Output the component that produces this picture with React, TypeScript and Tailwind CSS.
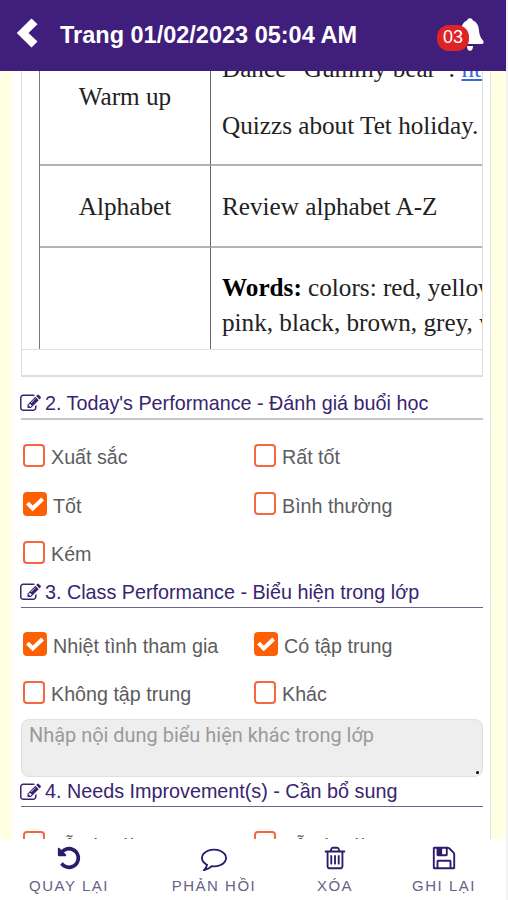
import React from "react";

const PENCIL =
  "M888 1184l116-116-152-152-116 116v56h96v96h56zm440-720q-16-16-33 1l-350 350q-17 17-1 33t33-1l350-350q17-17 1-33zm80 594v190q0 119-84.5 203.5t-203.5 84.5h-832q-119 0-203.5-84.5t-84.5-203.5v-832q0-119 84.5-203.5t203.5-84.5h832q63 0 117 25 15 7 18 23 3 17-9 29l-49 49q-14 14-32 8-23-6-45-6h-832q-66 0-113 47t-47 113v832q0 66 47 113t113 47h832q66 0 113-47t47-113v-126q0-13 9-22l64-64q15-15 35-7t20 29zm-96-738l288 288-672 672h-288v-288zm444 132l-92 92-288-288 92-92q28-28 68-28t68 28l152 152q28 28 28 68t-28 68z";
const TRASH =
  "M704 736v576q0 14-9 23t-23 9h-64q-14 0-23-9t-9-23v-576q0-14 9-23t23-9h64q14 0 23 9t9 23zm256 0v576q0 14-9 23t-23 9h-64q-14 0-23-9t-9-23v-576q0-14 9-23t23-9h64q14 0 23 9t9 23zm256 0v576q0 14-9 23t-23 9h-64q-14 0-23-9t-9-23v-576q0-14 9-23t23-9h64q14 0 23 9t9 23zm128 724v-948h-896v948q0 22 7 40.5t14.5 27 10.5 8.5h832q3 0 10.5-8.5t14.5-27 7-40.5zm-672-1076h448l-48-117q-7-9-17-11h-317q-10 2-17 11zm928 32v64q0 14-9 23t-23 9h-96v948q0 83-47 143.5t-113 60.5h-832q-66 0-113-58.5t-47-141.5v-952h-96q-14 0-23-9t-9-23v-64q0-14 9-23t23-9h309l70-167q15-37 54-63t79-26h320q40 0 79 26t54 63l70 167h309q14 0 23 9t9 23z";
const FLOPPY =
  "M512 1536h768v-384h-768v384zm896 0h128v-896q0-14-10-38.5t-20-34.5l-281-281q-10-10-34-20t-39-10v416q0 40-28 68t-68 28h-576q-40 0-68-28t-28-68v-416h-128v1280h128v-416q0-40 28-68t68-28h832q40 0 68 28t28 68v416zm-384-928v-320q0-13-9.5-22.5t-22.5-9.5h-192q-13 0-22.5 9.5t-9.5 22.5v320q0 13 9.5 22.5t22.5 9.5h192q13 0 22.5-9.5t9.5-22.5zm640 32v928q0 40-28 68t-68 28h-1344q-40 0-68-28t-28-68v-1344q0-40 28-68t68-28h928q40 0 88 20t76 48l280 280q28 28 48 76t20 88z";
const UNDO =
  "M1664 896q0 156-61 298t-164 245-245 164-298 61q-172 0-327-72.5t-264-204.5q-7-10-6.5-22.5t8.5-20.5l137-138q10-9 25-9 16 2 23 12 73 95 179 147t225 52q104 0 198.5-40.5t163.5-109.5 109.5-163.5 40.5-198.5-40.5-198.5-109.5-163.5-163.5-109.5-198.5-40.5q-98 0-188 35.5t-160 101.5l137 138q31 30 14 69-17 40-59 40h-448q-26 0-45-19t-19-45v-448q0-42 40-59 39-17 69 14l130 129q107-101 244.5-156.5t284.5-55.5q156 0 298 61t245 164 164 245 61 298z";
const COMMENT =
  "M896 384q-204 0-381.5 69.5t-282 187.5-104.5 255q0 112 71.5 213.5t201.5 175.5l87 50-27 96q-24 91-70 172 152-63 275-171l43-38 57 6q69 8 130 8 204 0 381.5-69.5t282-187.5 104.5-255-104.5-255-282-187.5-381.5-69.5zm896 512q0 174-120 321.5t-326 233-450 85.5q-70 0-145-8-198 175-460 242-49 14-114 22h-5q-15 0-27-10.5t-16-27.5v-1q-3-4-.5-12t2-10 4.5-9.5l6-9 7-8.5 8-9q7-8 31-34.5t34.5-38 31-39.5 32.5-51 27-59 26-76q-157-89-247.5-220t-90.5-281q0-174 120-321.5t326-233 450-85.5 450 85.5 326 233 120 321.5z";

function Icon({ d, className }: { d: string; className: string }) {
  return (
    <svg viewBox="0 0 1792 1792" className={className} fill="currentColor">
      <path d={d} />
    </svg>
  );
}

function Heading({ children, line }: { children: React.ReactNode; line: string }) {
  return (
    <h2 className={`flex items-center text-[19.75px] whitespace-nowrap text-[#38246f] ${line}`}>
      <Icon d={PENCIL} className="mr-[4px] -ml-px size-[21px] shrink-0" />
      {children}
    </h2>
  );
}

function Option({ label, checked = false, pad = "pt-[5px]" }: { label: string; checked?: boolean; pad?: string }) {
  return (
    <label className="flex h-[48.5px] w-[231px] items-center pl-[2px] text-[19.7px] whitespace-nowrap text-[#5c5c60]">
      {checked ? (
        <span className="mr-[6px] flex size-[24px] shrink-0 items-center justify-center rounded-[4px] bg-[#fd6004]">
          <svg viewBox="0 0 24 24" className="size-[24px]" fill="none" stroke="white" strokeWidth="4">
            <path d="M4.5 11.2l5.2 5.2L19.6 7" />
          </svg>
        </span>
      ) : (
        <span className="mr-[6px] h-[23px] w-[22px] shrink-0 rounded-[4px] border-2 border-[#f4673f] bg-white" />
      )}
      <span className={pad}>{label}</span>
    </label>
  );
}

function Action({ d, label, className }: { d: string; label: string; className: string }) {
  return (
    <button className={`flex flex-col items-center ${className}`}>
      <Icon d={d} className="size-[26px] text-[#2d1b6b]" />
      <span className="mt-[6px] text-[15px] leading-[18px] tracking-[1.5px] whitespace-nowrap text-[#67618a]">{label}</span>
    </button>
  );
}

export default function App() {
  return (
    <div className="flex h-[900px] w-[508px] flex-col overflow-hidden bg-[#f3f3f5] font-['Liberation_Sans',Arial,sans-serif]">
      <header className="flex h-[71px] w-[506px] shrink-0 items-center bg-[#3f1f7b] text-white">
        <svg viewBox="0 0 22 30" className="ml-[16px] h-[30px] w-[22px] -translate-y-[3px]" fill="currentColor">
          <path d="M15.5 0.5L21.5 6.2L12.5 15L21.5 23.5L15.5 29.5L0.8 15Z" />
        </svg>
        <h1 className="ml-[22px] pt-px text-[23.5px] font-bold whitespace-nowrap">Trang 01/02/2023 05:04 AM</h1>
        <div className="relative mr-[22px] ml-auto h-[34px] w-[47px]">
          <svg viewBox="0 0 28 34" className="absolute -top-px right-0 h-[34px] w-[28px]" fill="currentColor">
            <path d="M14 0.3C15.8 0.3 16.8 1.5 16.9 2.6C20.5 3.8 22.3 7 22.8 11C23.5 17.5 24.5 19.5 27.2 22.8C28.2 24.6 27.5 26 25.8 26H2.2C0.5 26 0 24.6 0.8 22.8C3.5 19.5 4.5 17.5 5.2 11C5.7 7 7.5 3.8 11.1 2.6C11.2 1.5 12.2 0.3 14 0.3ZM11 28H17C17 31 16 32.7 14 32.7S11 31 11 28Z" />
          </svg>
          <span className="absolute top-[6px] left-0 flex h-[26px] w-[32px] items-center justify-center rounded-[12px] bg-[#df2427] text-[18px]">03</span>
        </div>
      </header>

      <main className="flex h-[768px] w-[506px] shrink-0 overflow-hidden bg-[#feffe3] pr-[15px] pl-[12px]">
        <div className="w-[479px] border-r border-[#e3e3e3] bg-white pr-[7px] pl-[9px]">
          <section className="h-[306px] w-[462px] overflow-hidden border-x border-b-2 border-[#dedede]">
            <div className="h-[279px] overflow-hidden border-b border-[#e2e2e2] pl-[17px] font-['Liberation_Serif','Times_New_Roman',serif] text-[25.2px] text-[#222]">
              <div className="grid w-[560px] grid-cols-[171px_389px] grid-rows-[95px_82px_110px] border-l border-[#777]">
                <div className="flex justify-center border-r border-b-2 border-r-[#666] border-b-[#b3b3b3] pt-[8px] leading-[36px]">Warm up</div>
                <div className="overflow-hidden border-b-2 border-[#b3b3b3] pl-[11px] whitespace-nowrap">
                  <p className="-mt-[20px] leading-[36px]">
                    Dance “Gummy bear”<span className="ml-px">:</span> <span className="text-[#3568dd] underline decoration-2 underline-offset-2">https://www</span>
                  </p>
                  <p className="mt-[21px] leading-[36px]">Quizzs about Tet holiday.</p>
                </div>
                <div className="flex items-center justify-center border-r border-b-2 border-r-[#666] border-b-[#b3b3b3] pt-[2px]">Alphabet</div>
                <div className="flex items-center border-b-2 border-[#b3b3b3] pt-[2px] pl-[11px]">Review alphabet A-Z</div>
                <div className="border-r border-[#666]" />
                <div className="pt-[22px] pl-[11px] leading-[35px] whitespace-nowrap">
                  <p><b className="text-black">Words:</b> colors: red, yellow, blue,</p>
                  <p>pink, black, brown, grey, white</p>
                </div>
              </div>
            </div>
          </section>

          <div className="h-[12px]" />
          <Heading line="h-[31px] border-b-2 border-[#c6c5cc]">2. Today's Performance - Đánh giá buổi học</Heading>
          <div className="flex flex-wrap pt-[11px]">
            <Option label="Xuất sắc" />
            <Option label="Rất tốt" />
            <Option label="Tốt" checked pad="pt-[6px]" />
            <Option label="Bình thường" pad="pt-[6px]" />
            <Option label="Kém" />
          </div>
          <Heading line="h-[31px] border-b border-[#6c6590] pt-[2px]">3. Class Performance - Biểu hiện trong lớp</Heading>
          <div className="flex flex-wrap pt-[12px]">
            <Option label="Nhiệt tình tham gia" checked pad="pt-[6px]" />
            <Option label="Có tập trung" checked pad="pt-[6px]" />
            <Option label="Không tập trung" />
            <Option label="Khác" />
          </div>
          <div className="mt-[2px] flex h-[58px] w-[462px] justify-between rounded-[8px] border border-[#e0e0e0] bg-[#eeeeee] pt-[2px] pl-[7px] font-['Roboto','Noto_Sans',sans-serif] text-[19.95px] leading-[26px] text-[#9a9a9a]">
            <span className="whitespace-nowrap">Nhập nội dung biểu hiện khác trong lớp</span>
            <span className="mr-[3px] mb-[2px] size-[3px] self-end rounded-full bg-black" />
          </div>
          <Heading line="h-[30px] border-b border-[#6c6590] pt-[2px]">4. Needs Improvement(s) - Cần bổ sung</Heading>
          <div className="flex flex-wrap pt-[12px]">
            <Option label="Vẫn ít nói" pad="pt-[8px]" />
            <Option label="Vẫn ít nói" pad="pt-[8px]" />
          </div>
        </div>
      </main>

      <footer className="flex h-[61px] w-[506px] shrink-0 bg-white pt-[6px]">
        <Action d={UNDO} label="QUAY LẠI" className="ml-[19px] w-[100px]" />
        <Action d={COMMENT} label="PHẢN HỒI" className="ml-[45px] w-[100px]" />
        <Action d={TRASH} label="XÓA" className="ml-[21px] w-[100px]" />
        <Action d={FLOPPY} label="GHI LẠI" className="ml-[9px] w-[100px]" />
      </footer>
    </div>
  );
}
